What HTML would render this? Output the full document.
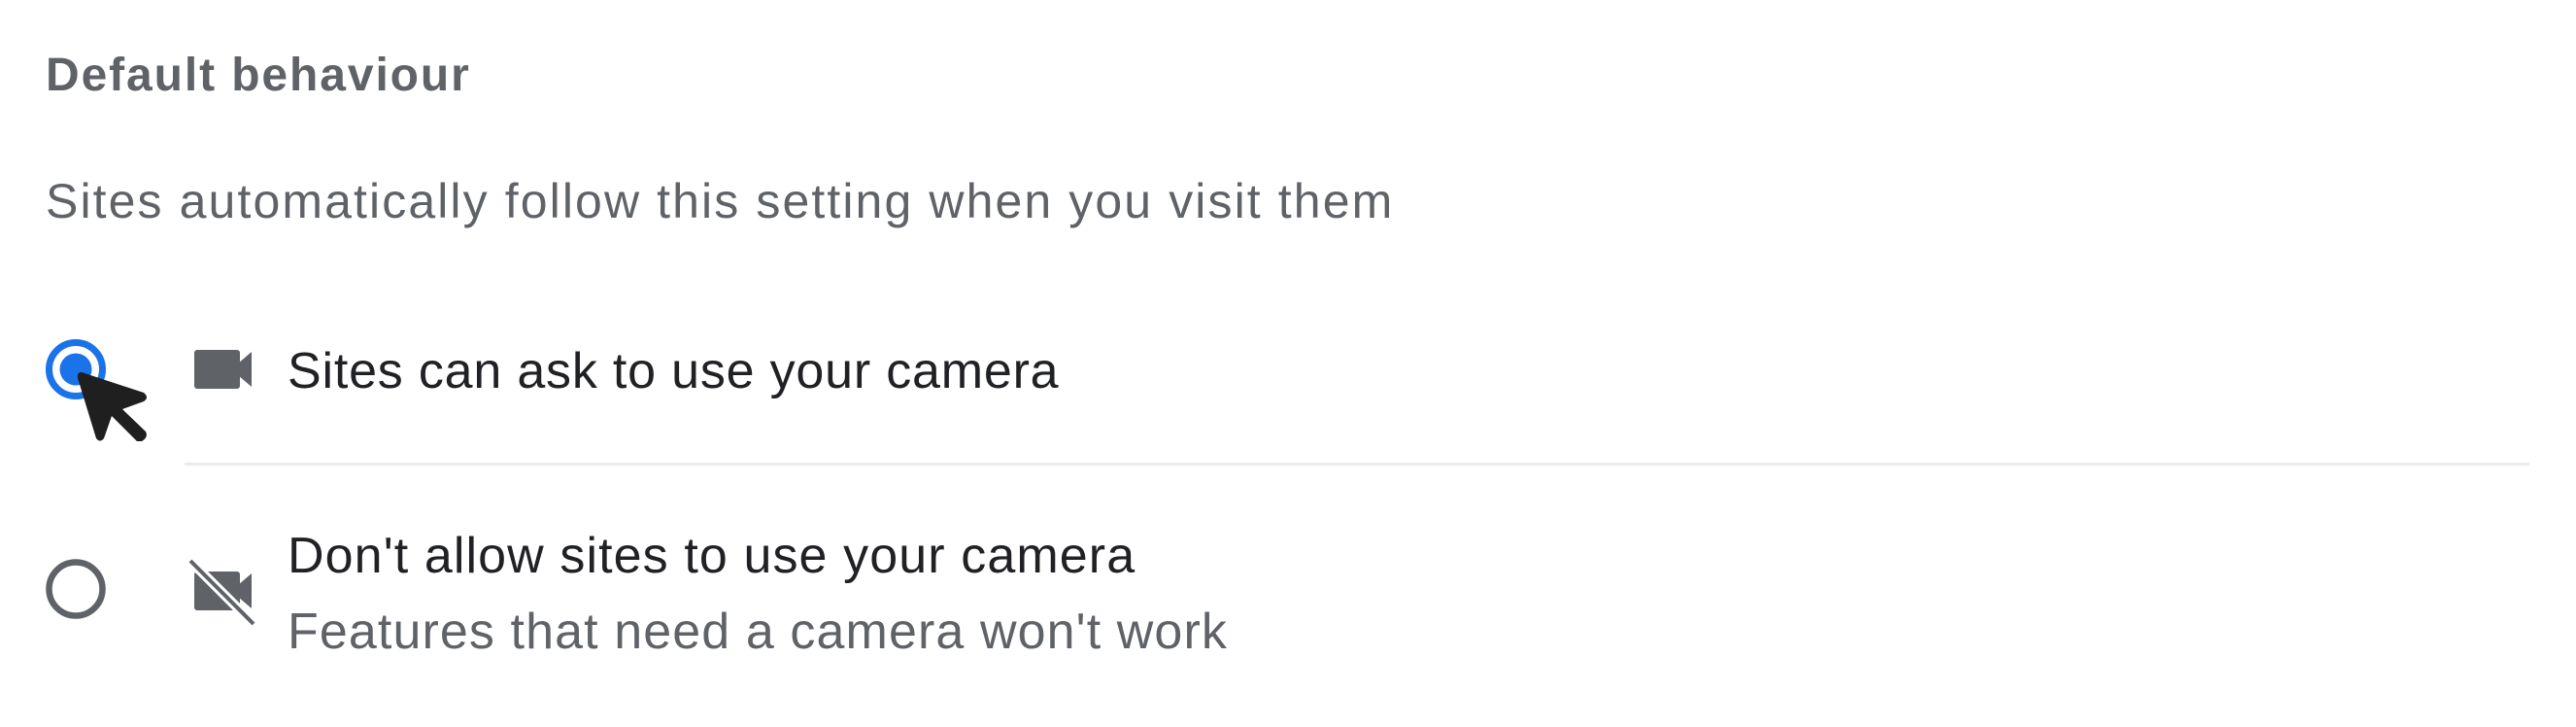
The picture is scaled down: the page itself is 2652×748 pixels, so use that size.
<!DOCTYPE html>
<html><head><meta charset="utf-8"><style>
html,body{margin:0;padding:0;background:#fff;width:2652px;height:748px;overflow:hidden;position:relative;font-family:"Liberation Sans",Arial,sans-serif}
.t{position:absolute;white-space:nowrap;line-height:1;font-size:52px}
</style></head><body>
<div class="t" style="left:47px;top:54px;font-size:48px;font-weight:bold;color:#5f6368;letter-spacing:1.9px">Default behaviour</div>
<div class="t" style="left:47px;top:182px;font-size:50px;color:#5f6368;letter-spacing:2.1px">Sites automatically follow this setting when you visit them</div>
<div class="t" style="left:296px;top:356px;color:#202124;letter-spacing:0.8px">Sites can ask to use your camera</div>
<div style="position:absolute;left:190px;top:476px;width:2414px;height:3px;background:#ebebeb"></div>
<div class="t" style="left:296px;top:546px;color:#202124;letter-spacing:1.1px">Don't allow sites to use your camera</div>
<div class="t" style="left:296px;top:624px;color:#5f6368;letter-spacing:1.1px">Features that need a camera won't work</div>
<svg width="2652" height="748" style="position:absolute;left:0;top:0">
<circle cx="78" cy="380" r="27.5" fill="none" stroke="#1a73e8" stroke-width="7"/>
<circle cx="78" cy="380" r="16.5" fill="#1a73e8"/>
<circle cx="78" cy="606" r="27.5" fill="none" stroke="#5f6368" stroke-width="6.5"/>
<rect x="200" y="360" width="47" height="40" rx="3" fill="#5f6368"/>
<path d="M245 374 L259 362 L259 398 L245 386 Z" fill="#5f6368"/>
<rect x="200" y="588" width="47" height="40" rx="3" fill="#5f6368"/>
<path d="M245 602 L259 590 L259 626 L245 614 Z" fill="#5f6368"/>
<line x1="194" y1="575" x2="262" y2="643" stroke="#fff" stroke-width="10"/>
<line x1="196" y1="577" x2="261" y2="642" stroke="#5f6368" stroke-width="4"/>
<path d="M84 383 L148 404 Q154 409 148 413 L126 421 L150 444 Q153 450 146 454 L141 454 L115 428 L107 451 Q103 456 99 451 L80 389 Q79 383 84 383 Z" fill="#1f1f1f"/>
</svg>
</body></html>
